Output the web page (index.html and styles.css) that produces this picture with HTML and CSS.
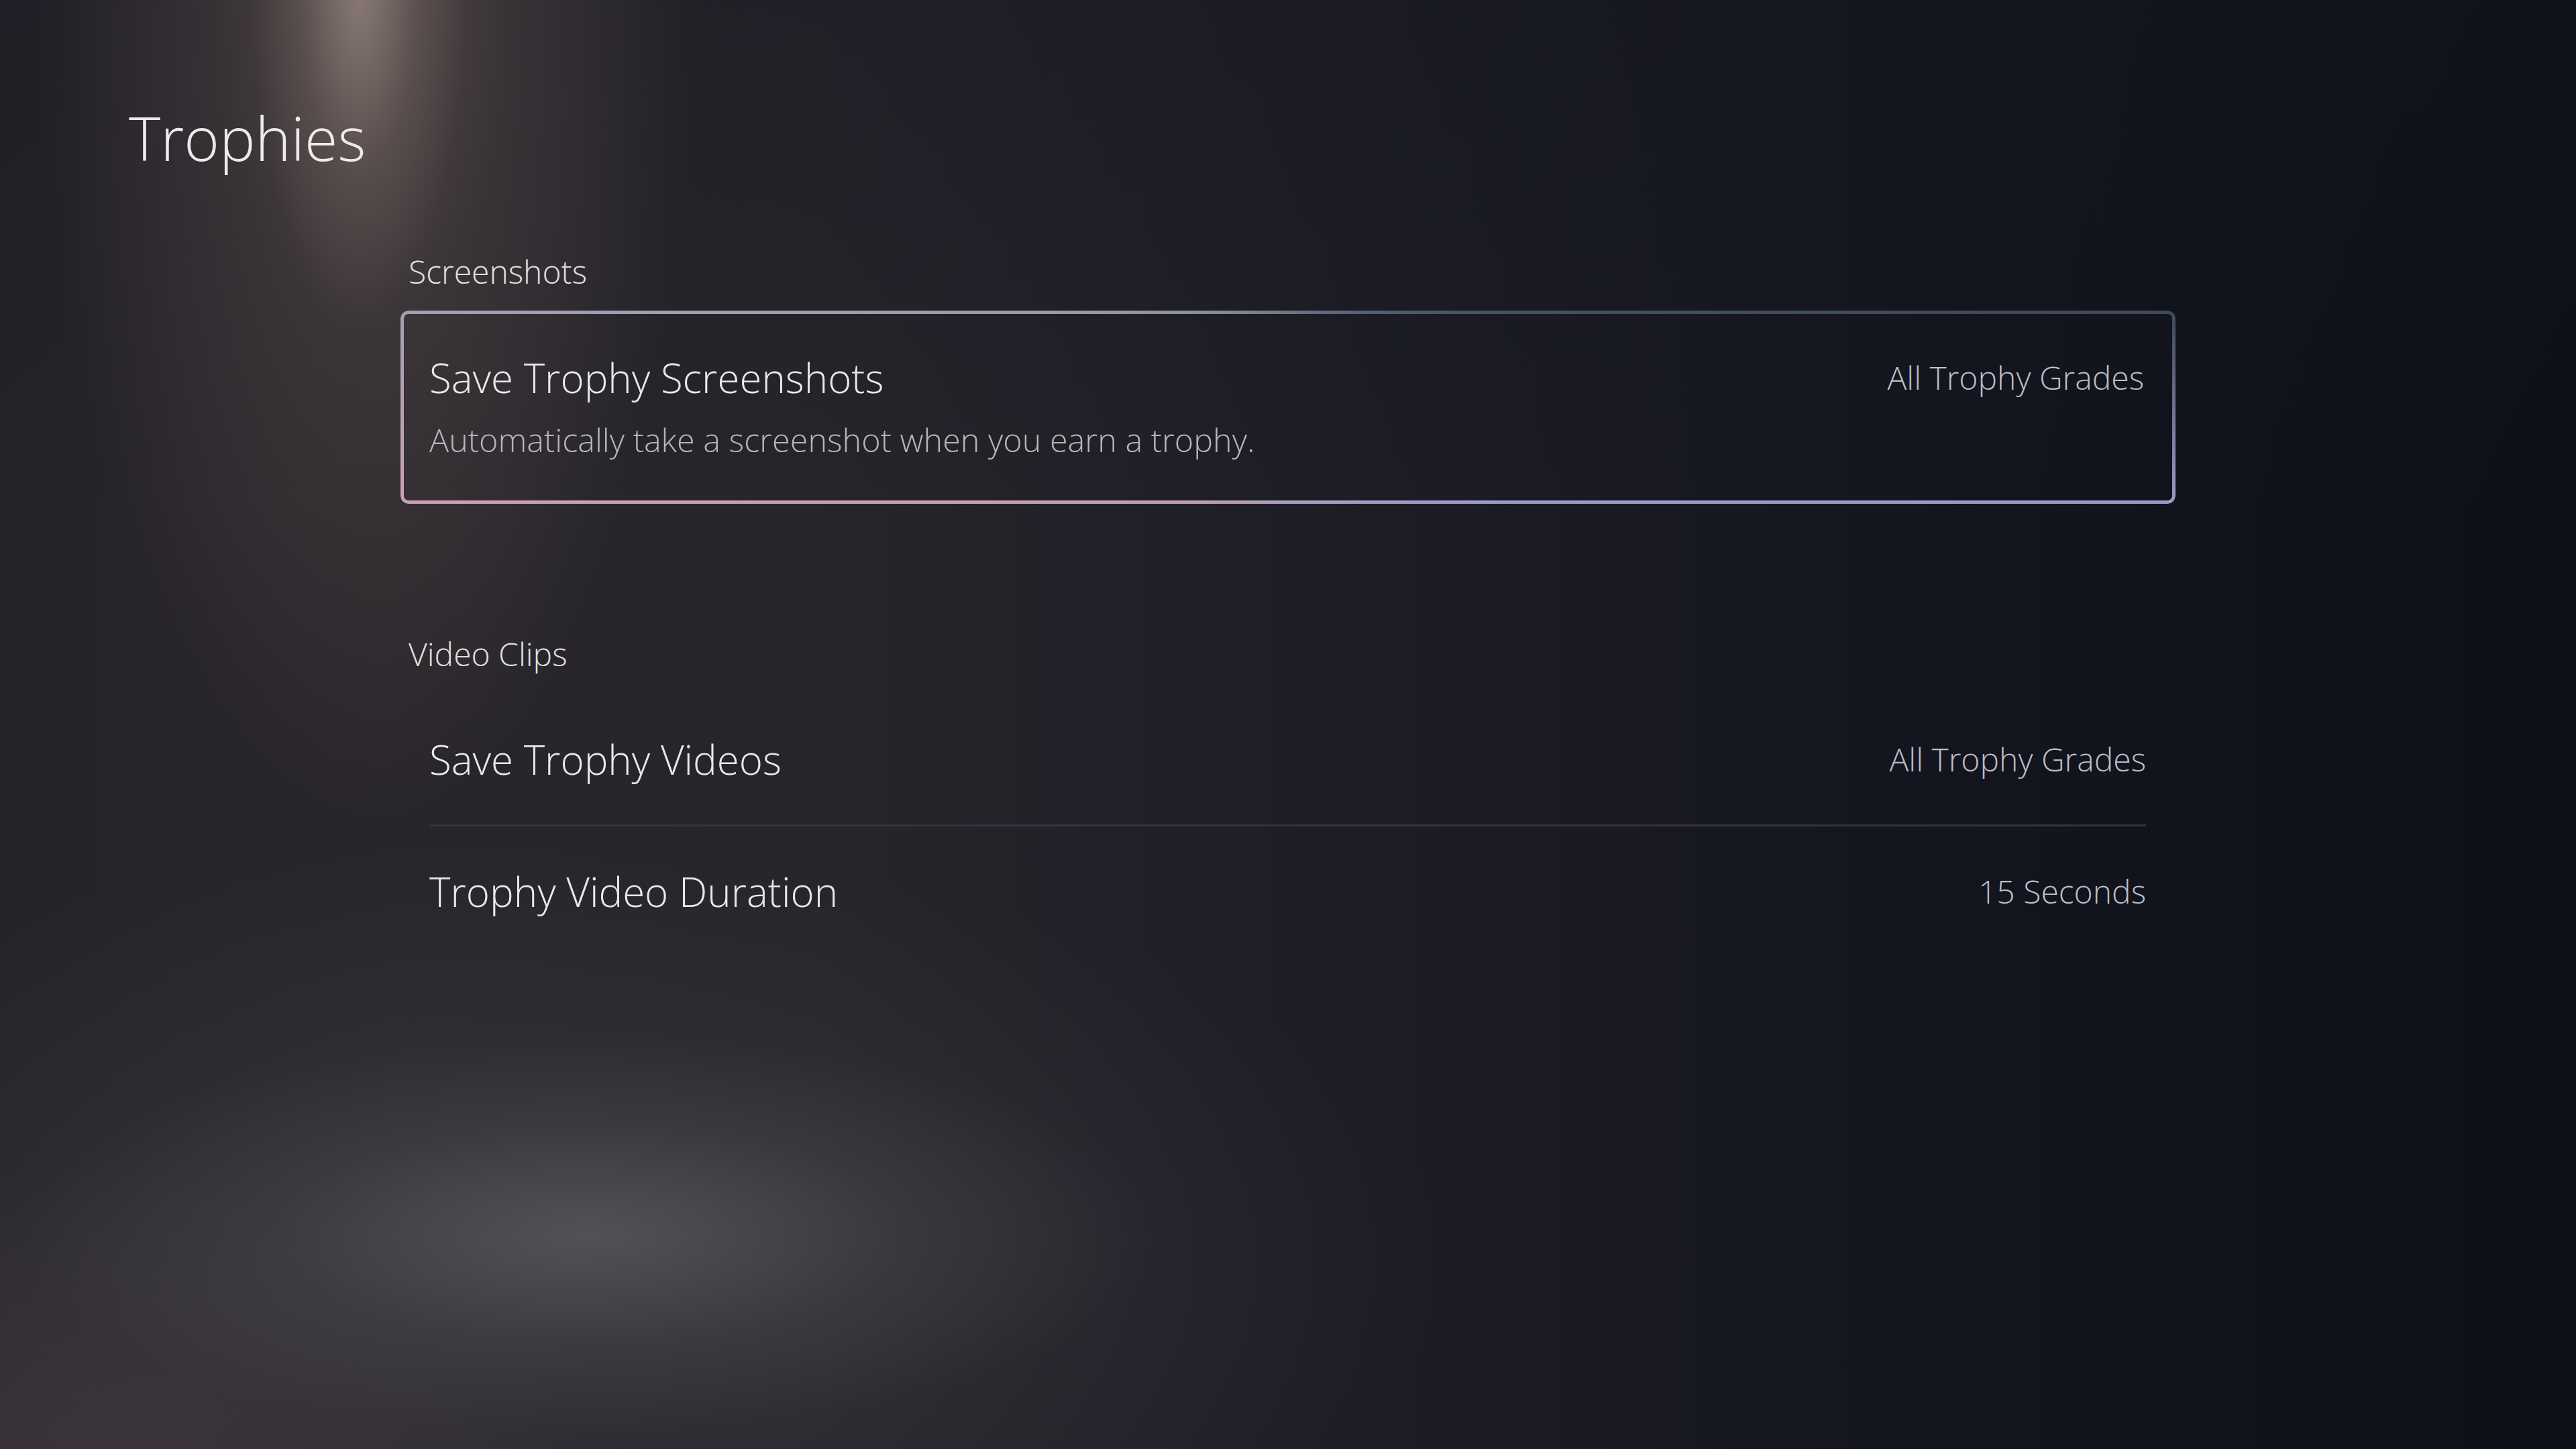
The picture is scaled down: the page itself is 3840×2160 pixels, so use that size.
FILE: index.html
```html
<!DOCTYPE html>
<html lang="en">
<head>
<meta charset="utf-8">
<title>Trophies</title>
<link rel="stylesheet" href="styles.css">
</head>
<body>
<main class="screen">
  <h1 class="title">Trophies</h1>
  <div class="content">
    <section class="group">
      <h2 class="group-label">Screenshots</h2>
      <div class="card">
        <div class="card-main">
          <span class="item-title">Save Trophy Screenshots</span>
          <span class="item-value">All Trophy Grades</span>
        </div>
        <p class="item-desc">Automatically take a screenshot when you earn a trophy.</p>
      </div>
    </section>
    <section class="group group-videos">
      <h2 class="group-label">Video Clips</h2>
      <ul class="list">
        <li class="row">
          <span class="item-title">Save Trophy Videos</span>
          <span class="item-value">All Trophy Grades</span>
        </li>
        <li class="row">
          <span class="item-title">Trophy Video Duration</span>
          <span class="item-value">15 Seconds</span>
        </li>
      </ul>
    </section>
  </div>
</main>
</body>
</html>
```
FILE: styles.css
```css
html, body {
  margin: 0;
  padding: 0;
}
body {
  width: 3840px;
  height: 2160px;
  overflow: hidden;
  font-family: "Open Sans", "Noto Sans", "Liberation Sans", sans-serif;
  font-weight: 300;
  color: #e8e6e8;
  background-color: #151620;
  background-image:
    radial-gradient(ellipse 160px 500px at 535px -20px, rgba(178, 160, 150, 0.55), rgba(150, 132, 122, 0.2) 55%, rgba(150, 130, 120, 0) 100%),
    radial-gradient(ellipse 500px 1300px at 545px -80px, rgba(130, 110, 104, 0.58), rgba(112, 94, 92, 0.28) 45%, rgba(90, 78, 80, 0) 100%),
    radial-gradient(ellipse 850px 300px at 880px 1840px, rgba(88, 90, 96, 0.8), rgba(75, 76, 82, 0.35) 55%, rgba(70, 70, 76, 0) 100%),
    radial-gradient(ellipse 1400px 620px at 760px 1880px, rgba(70, 70, 76, 0.45), rgba(70, 70, 76, 0) 100%),
    radial-gradient(ellipse 700px 420px at 150px 2160px, rgba(72, 58, 66, 0.55), rgba(72, 58, 66, 0) 100%),
    linear-gradient(to bottom, rgba(20, 22, 32, 0.35) 0%, rgba(20, 22, 32, 0) 35%),
    linear-gradient(to right, #252329 0%, #29262b 15%, #26252b 32%, #1d1d26 52%, #13151f 75%, #0d0f19 100%);
}
.screen {
  box-sizing: border-box;
  height: 100%;
  padding: 160px 0 0 0;
}
.title {
  margin: 0 0 0 192px;
  font-size: 90px;
  font-weight: 300;
  line-height: 1;
  letter-spacing: 0;
  color: #eceaea;
}
.content {
  width: 2646px;
  margin: 131px 0 0 597px;
}
.group-label {
  margin: 0 0 34px 12px;
  font-size: 48px;
  font-weight: 300;
  line-height: 1;
  color: #e2e0e0;
}
.card {
  position: relative;
  border-radius: 12px;
  padding: 70px 47px 71px 43px;
}
.card::before {
  content: "";
  position: absolute;
  inset: 0;
  border-radius: 12px;
  padding: 5px;
  background: conic-gradient(from 0deg at 50% 50%,
    #6e7686 0deg, #4a5666 60deg, #3e4a58 84deg, #9a9ac6 96deg,
    #a69cc0 150deg, #b49eb6 210deg, #c8a2b2 264deg, #a2a0b0 276deg, #8a8c9c 320deg, #6e7686 360deg);
  -webkit-mask: linear-gradient(#000 0 0) content-box, linear-gradient(#000 0 0);
  -webkit-mask-composite: xor;
  mask-composite: exclude;
  pointer-events: none;
}
.card-main {
  display: flex;
  align-items: center;
  justify-content: space-between;
}
.item-title {
  font-size: 60px;
  line-height: 1;
  color: #e8e7ea;
}
.item-value {
  font-size: 48px;
  line-height: 1;
  color: #bcbdc6;
}
.item-desc {
  margin: 38px 0 0 0;
  font-size: 48.5px;
  line-height: 1;
  color: #b6b5ba;
}
.group-videos {
  margin-top: 200px;
}
.group-videos .group-label {
  margin-bottom: 36px;
}
.list {
  list-style: none;
  margin: 0 44px 0 43px;
  padding: 0;
}
.row {
  display: flex;
  align-items: center;
  justify-content: space-between;
  height: 194px;
}
.row + .row {
  border-top: 3px solid #34353d;
}
```
